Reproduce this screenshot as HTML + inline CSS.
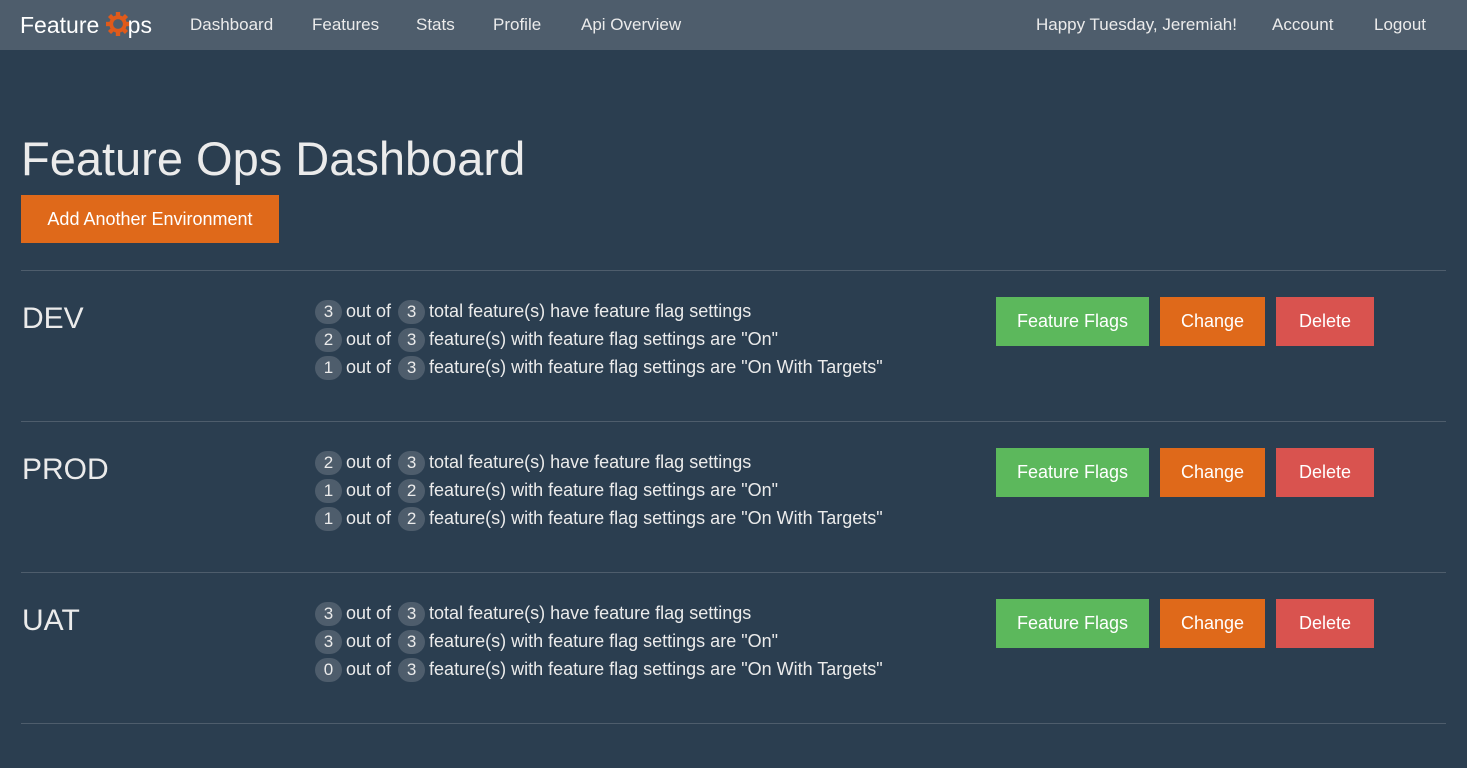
<!DOCTYPE html>
<html><head><style>
body{margin:0;background:#2b3e50;font-family:"Liberation Sans",sans-serif;color:#ebebeb;width:1467px;height:768px;overflow:hidden;position:relative}
.nav{position:absolute;left:0;top:0;width:1467px;height:50px;background:#4e5d6c}
.nav span{position:absolute;top:15px;font-size:17px;color:#ebebeb}
.logo{position:absolute;left:20px;top:12px;font-size:23px;color:#fff}
h1{position:absolute;left:21px;top:131px;margin:0;font-weight:normal;font-size:47px;color:#ebebeb}
.btn{position:absolute;color:#fff;font-size:18px;text-align:center;line-height:49px;height:49px}
.o{background:#df691a}.g{background:#5cb85c}.r{background:#d9534f}
.hr{position:absolute;left:21px;width:1425px;height:1px;background:#4e5d6c}
.env{position:absolute;left:22px;font-size:30px}
.st{position:absolute;left:315px;font-size:18px;line-height:28px;white-space:nowrap}
.b{display:inline-block;width:27px;height:24px;border-radius:12px;background:#4e5d6c;text-align:center;line-height:24px;vertical-align:middle;margin-right:4px;font-size:17px}
.st .b2{margin-left:2px}
</style></head><body>
<div class="nav">
<div class="logo">Feature <svg width="24" height="24" viewBox="0 0 22 22" style="vertical-align:-3px;margin-right:-2px"><g fill="#e05a1a"><circle cx="11" cy="11" r="8"/><rect x="9" y="0" width="4" height="22"/><rect x="0" y="9" width="22" height="4"/><rect x="9" y="0" width="4" height="22" transform="rotate(45 11 11)"/><rect x="9" y="0" width="4" height="22" transform="rotate(-45 11 11)"/></g><circle cx="11" cy="11" r="4.5" fill="#4e5d6c"/></svg>ps</div>
<span style="left:190px">Dashboard</span><span style="left:312px">Features</span><span style="left:416px">Stats</span><span style="left:493px">Profile</span><span style="left:581px">Api Overview</span>
<span style="left:1036px">Happy Tuesday, Jeremiah!</span><span style="left:1272px">Account</span><span style="left:1374px">Logout</span>
</div>
<h1>Feature Ops Dashboard</h1>
<div class="btn o" style="left:21px;top:195px;width:258px;line-height:48px;height:48px">Add Another Environment</div>
<div class="hr" style="top:270px"></div>
<div class="hr" style="top:421px"></div>
<div class="hr" style="top:572px"></div>
<div class="hr" style="top:723px"></div>

<div class="env" style="top:302px">DEV</div>
<div class="st" style="top:297px"><span class="b">3</span>out of <span class="b b2">3</span>total feature(s) have feature flag settings<br><span class="b">2</span>out of <span class="b b2">3</span>feature(s) with feature flag settings are "On"<br><span class="b">1</span>out of <span class="b b2">3</span>feature(s) with feature flag settings are "On With Targets"</div>
<div class="btn g" style="left:996px;top:297px;width:153px">Feature Flags</div><div class="btn o" style="left:1160px;top:297px;width:105px">Change</div><div class="btn r" style="left:1276px;top:297px;width:98px">Delete</div>

<div class="env" style="top:453px">PROD</div>
<div class="st" style="top:448px"><span class="b">2</span>out of <span class="b b2">3</span>total feature(s) have feature flag settings<br><span class="b">1</span>out of <span class="b b2">2</span>feature(s) with feature flag settings are "On"<br><span class="b">1</span>out of <span class="b b2">2</span>feature(s) with feature flag settings are "On With Targets"</div>
<div class="btn g" style="left:996px;top:448px;width:153px">Feature Flags</div><div class="btn o" style="left:1160px;top:448px;width:105px">Change</div><div class="btn r" style="left:1276px;top:448px;width:98px">Delete</div>

<div class="env" style="top:604px">UAT</div>
<div class="st" style="top:599px"><span class="b">3</span>out of <span class="b b2">3</span>total feature(s) have feature flag settings<br><span class="b">3</span>out of <span class="b b2">3</span>feature(s) with feature flag settings are "On"<br><span class="b">0</span>out of <span class="b b2">3</span>feature(s) with feature flag settings are "On With Targets"</div>
<div class="btn g" style="left:996px;top:599px;width:153px">Feature Flags</div><div class="btn o" style="left:1160px;top:599px;width:105px">Change</div><div class="btn r" style="left:1276px;top:599px;width:98px">Delete</div>
</body></html>
